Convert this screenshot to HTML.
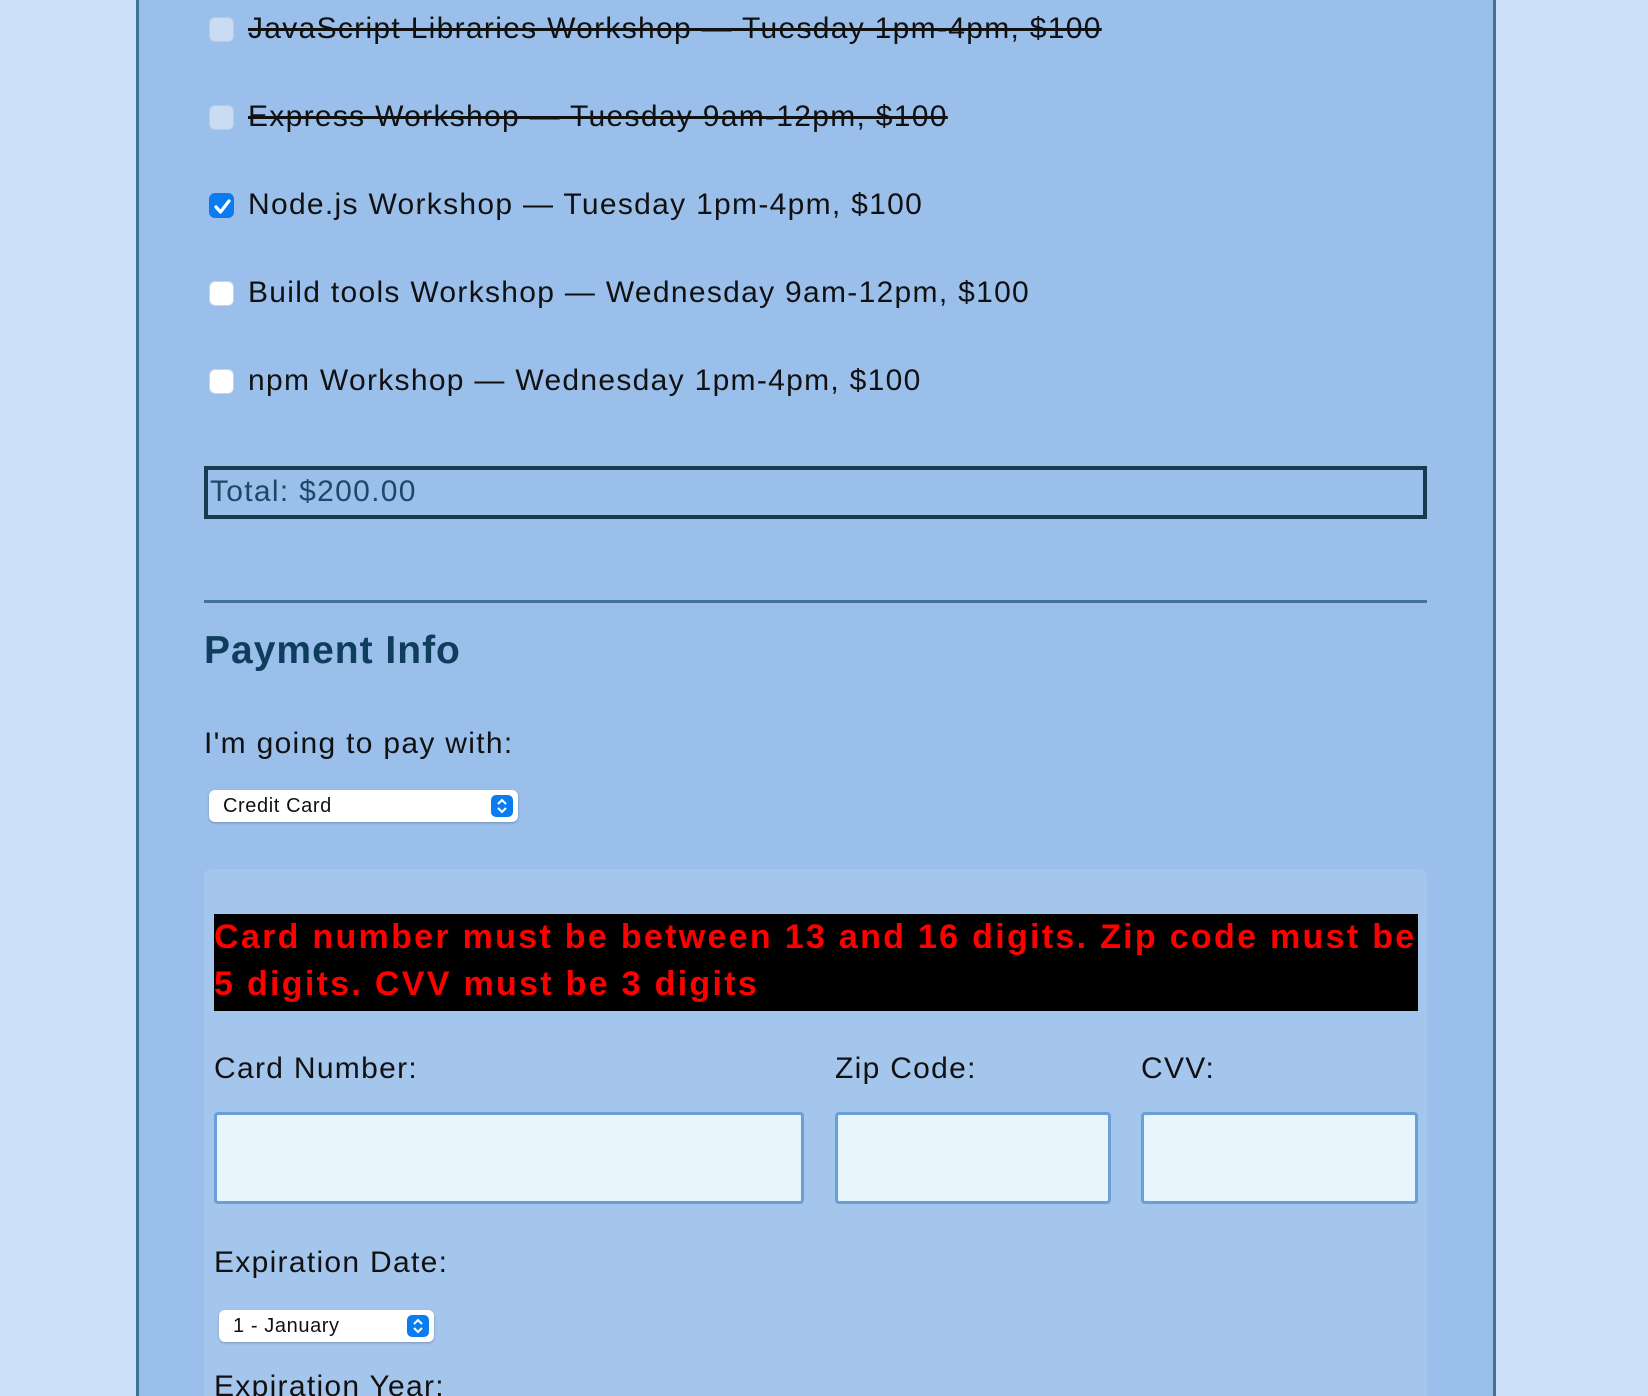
<!DOCTYPE html>
<html><head><meta charset="utf-8"><style>
*{box-sizing:border-box;margin:0;padding:0}
html{width:1648px;height:1396px;overflow:hidden}
body{width:1648px;height:1396px;overflow:hidden;background:#cbe0f7;font-family:"Liberation Sans",sans-serif;color:#111;position:relative}
.main{position:absolute;left:136px;top:0;width:1360px;height:1396px;background:#9abfea;border:3px solid #41739a;border-top:none;border-bottom:none}
.abs{position:absolute;white-space:nowrap}
.cb{position:absolute;left:209px;width:25px;height:25px;border-radius:6px;background:#fff;border:1px solid #c9d4e0}
.cb.dis{background:#c9dcf2;border-color:#b6cbe3}
.cb.on{background:#0a7cf0;border-color:#0a7cf0}
.t{font-size:30px;letter-spacing:1.3px;line-height:34px}
.lbl{position:absolute;left:248px;white-space:nowrap}
.lbl.s{text-decoration:line-through}
.sel{position:absolute;background:#fff;border-radius:6px;box-shadow:0 1px 2px rgba(0,0,0,.25);font-size:20px;letter-spacing:0.6px;line-height:32px;padding-left:14px}
.arr{position:absolute;right:5px;top:5px;width:22px;height:22px;border-radius:5px;background:#0a7cf0}
.inp{position:absolute;top:1112px;height:92px;background:#e8f4fb;border:3px solid #6b9fd8;border-radius:4px}
.fl{position:absolute;top:1052px}
</style></head><body>
<div class="main"></div>
<div class="cb dis" style="top:17px"></div><div class="lbl s t" style="top:12px">JavaScript Libraries Workshop — Tuesday 1pm-4pm, $100</div>
<div class="cb dis" style="top:105px"></div><div class="lbl s t" style="top:100px">Express Workshop — Tuesday 9am-12pm, $100</div>
<div class="cb on" style="top:193px"><svg width="25" height="25" viewBox="0 0 25 25"><path d="M6 13l4.5 5L19 7" stroke="#fff" stroke-width="3.2" fill="none" stroke-linecap="round" stroke-linejoin="round"/></svg></div><div class="lbl t" style="top:188px">Node.js Workshop — Tuesday 1pm-4pm, $100</div>
<div class="cb" style="top:281px"></div><div class="lbl t" style="top:276px">Build tools Workshop — Wednesday 9am-12pm, $100</div>
<div class="cb" style="top:369px"></div><div class="lbl t" style="top:364px">npm Workshop — Wednesday 1pm-4pm, $100</div>
<div class="abs t" style="left:204px;top:466px;width:1223px;height:53px;border:4px solid #163b50;color:#1b4a68;line-height:44px;padding-left:2px">Total: $200.00</div>
<div class="abs" style="left:204px;top:600px;width:1223px;height:3px;background:#41739a"></div>
<div class="abs" style="left:204px;top:628px;font-size:39px;font-weight:bold;color:#0f3d5c;line-height:46px;letter-spacing:1px">Payment Info</div>
<div class="abs t" style="left:204px;top:727px">I'm going to pay with:</div>
<div class="sel" style="left:209px;top:790px;width:309px;height:32px">Credit Card<div class="arr"><svg width="22" height="22"><path d="M7 9l4-4 4 4M7 13l4 4 4-4" stroke="#fff" stroke-width="2" fill="none"/></svg></div></div>
<div class="abs" style="left:204px;top:869px;width:1223px;height:527px;background:#a4c5ec;border-radius:7px 7px 0 0"></div>
<div class="abs" style="left:214px;top:914px;width:1204px;height:97px;background:#000;color:#f00;font-weight:bold;font-size:34px;line-height:47px;white-space:normal;letter-spacing:2.3px">Card number must be between 13 and 16 digits. Zip code must be 5 digits. CVV must be 3 digits</div>
<div class="fl t" style="left:214px">Card Number:</div>
<div class="fl t" style="left:835px">Zip Code:</div>
<div class="fl t" style="left:1141px">CVV:</div>
<div class="inp" style="left:214px;width:590px"></div>
<div class="inp" style="left:835px;width:276px"></div>
<div class="inp" style="left:1141px;width:277px"></div>
<div class="abs t" style="left:214px;top:1246px">Expiration Date:</div>
<div class="sel" style="left:219px;top:1310px;width:215px;height:32px">1 - January<div class="arr"><svg width="22" height="22"><path d="M7 9l4-4 4 4M7 13l4 4 4-4" stroke="#fff" stroke-width="2" fill="none"/></svg></div></div>
<div class="abs t" style="left:214px;top:1370px">Expiration Year:</div>
</body></html>
